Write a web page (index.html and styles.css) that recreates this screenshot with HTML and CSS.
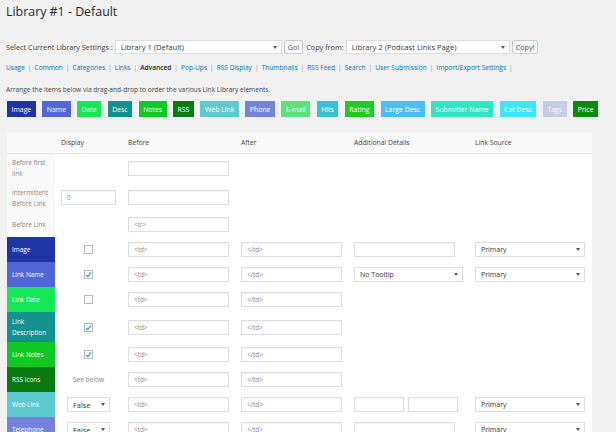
FILE: index.html
```html
<!DOCTYPE html>
<html>
<head>
<meta charset="utf-8">
<title>Library #1 - Default</title>
<link rel="stylesheet" href="styles.css">
</head>
<body>
<div class="wrap">
  <h1 class="title">Library #1 - Default</h1>

  <div class="libsel">
    <span class="lbl">Select Current Library Settings :</span>
    <div class="sel sel-lib"><span>Library 1 (Default)</span><span class="arr"></span></div>
    <button class="btn btn-go">Go!</button>
    <span class="lbl lbl-copy">Copy from:</span>
    <div class="sel sel-copy"><span>Library 2 (Podcast Links Page)</span><span class="arr"></span></div>
    <button class="btn btn-copy">Copy!</button>
  </div>

  <div class="tabs">
    <a>Usage</a><span class="sep">|</span><a>Common</a><span class="sep">|</span><a>Categories</a><span class="sep">|</span><a>Links</a><span class="sep">|</span><b>Advanced</b><span class="sep">|</span><a>Pop-Ups</a><span class="sep">|</span><a>RSS Display</a><span class="sep">|</span><a>Thumbnails</a><span class="sep">|</span><a>RSS Feed</a><span class="sep">|</span><a>Search</a><span class="sep">|</span><a>User Submission</a><span class="sep">|</span><a>Import/Export Settings</a><span class="sep">|</span>
  </div>

  <p class="desc">Arrange the items below via drag-and-drop to order the various Link Library elements.</p>

  <div class="tags">
    <span class="tag c-image">Image</span>
    <span class="tag c-name">Name</span>
    <span class="tag c-date">Date</span>
    <span class="tag c-desc">Desc</span>
    <span class="tag c-notes">Notes</span>
    <span class="tag c-rss">RSS</span>
    <span class="tag c-web">Web Link</span>
    <span class="tag c-phone">Phone</span>
    <span class="tag c-email">E-mail</span>
    <span class="tag c-hits">Hits</span>
    <span class="tag c-rating">Rating</span>
    <span class="tag c-large">Large Desc</span>
    <span class="tag c-submitter">Submitter Name</span>
    <span class="tag c-cat">Cat Desc</span>
    <span class="tag c-tags">Tags</span>
    <span class="tag c-price">Price</span>
  </div>

  <table class="grid">
    <colgroup>
      <col class="w-label"><col class="w-display"><col class="w-before"><col class="w-after"><col class="w-extra"><col class="w-source">
    </colgroup>
    <thead>
      <tr><th></th><th>Display</th><th>Before</th><th>After</th><th>Additional Details</th><th>Link Source</th></tr>
    </thead>
    <tbody>
      <tr class="h30">
        <td class="lab">Before first link</td><td></td>
        <td><div class="inp"></div></td><td></td><td></td><td></td>
      </tr>
      <tr class="h29">
        <td class="lab">Intermittent Before Link</td>
        <td class="ctr"><div class="inp inp-sm">0</div></td>
        <td><div class="inp"></div></td><td></td><td></td><td></td>
      </tr>
      <tr class="h25">
        <td class="lab">Before Link</td><td></td>
        <td><div class="inp">&lt;tr&gt;</div></td><td></td><td></td><td></td>
      </tr>
      <tr class="h25">
        <td class="lab c-image">Image</td>
        <td class="ctr"><span class="cb"></span></td>
        <td><div class="inp">&lt;td&gt;</div></td>
        <td><div class="inp">&lt;/td&gt;</div></td>
        <td><div class="inp"></div></td>
        <td><div class="sel sel-src"><span>Primary</span><span class="arr"></span></div></td>
      </tr>
      <tr class="h25">
        <td class="lab c-name">Link Name</td>
        <td class="ctr"><span class="cb on"></span></td>
        <td><div class="inp">&lt;td&gt;</div></td>
        <td><div class="inp">&lt;/td&gt;</div></td>
        <td><div class="sel sel-tip"><span>No Tooltip</span><span class="arr"></span></div></td>
        <td><div class="sel sel-src"><span>Primary</span><span class="arr"></span></div></td>
      </tr>
      <tr class="h25">
        <td class="lab c-date">Link Date</td>
        <td class="ctr"><span class="cb"></span></td>
        <td><div class="inp">&lt;td&gt;</div></td>
        <td><div class="inp">&lt;/td&gt;</div></td>
        <td></td><td></td>
      </tr>
      <tr class="h30">
        <td class="lab c-desc">Link Description</td>
        <td class="ctr"><span class="cb on"></span></td>
        <td><div class="inp">&lt;td&gt;</div></td>
        <td><div class="inp">&lt;/td&gt;</div></td>
        <td></td><td></td>
      </tr>
      <tr class="h25">
        <td class="lab c-notes">Link Notes</td>
        <td class="ctr"><span class="cb on"></span></td>
        <td><div class="inp">&lt;td&gt;</div></td>
        <td><div class="inp">&lt;/td&gt;</div></td>
        <td></td><td></td>
      </tr>
      <tr class="h25">
        <td class="lab c-rss">RSS Icons</td>
        <td class="ctr note">See below</td>
        <td><div class="inp">&lt;td&gt;</div></td>
        <td><div class="inp">&lt;/td&gt;</div></td>
        <td></td><td></td>
      </tr>
      <tr class="h25">
        <td class="lab c-web">Web Link</td>
        <td class="ctr"><div class="sel sel-bool"><span>False</span><span class="arr"></span></div></td>
        <td><div class="inp">&lt;td&gt;</div></td>
        <td><div class="inp">&lt;/td&gt;</div></td>
        <td><div class="pair"><div class="inp inp-half"></div><div class="inp inp-half"></div></div></td>
        <td><div class="sel sel-src"><span>Primary</span><span class="arr"></span></div></td>
      </tr>
      <tr class="h25">
        <td class="lab c-phone">Telephone</td>
        <td class="ctr"><div class="sel sel-bool"><span>False</span><span class="arr"></span></div></td>
        <td><div class="inp">&lt;td&gt;</div></td>
        <td><div class="inp">&lt;/td&gt;</div></td>
        <td><div class="inp"></div></td>
        <td><div class="sel sel-src"><span>Primary</span><span class="arr"></span></div></td>
      </tr>
    </tbody>
  </table>
</div>
</body>
</html>
```

FILE: styles.css
```css
* { box-sizing: border-box; }
html, body { margin: 0; padding: 0; }
body {
  background: #f1f1f1;
  font-family: "Open Sans", "Noto Sans", sans-serif;
  font-size: 6.6px;
  color: #444;
  width: 616px;
  height: 432px;
  overflow: hidden;
}
.wrap { padding: 0 0 0 6px; }

.title {
  margin: 0;
  padding-top: 2px;
  font-size: 12.4px;
  font-weight: 400;
  color: #23282d;
  line-height: 20px;
}

.libsel {
  display: flex;
  align-items: center;
  margin-top: 18px;
  height: 14px;
}
.lbl { color: #444; margin-right: 2px; font-size: 7.3px; }
.lbl-copy { margin-left: 3px; }
.sel {
  display: flex;
  align-items: center;
  justify-content: space-between;
  height: 14px;
  background: #fff;
  border: 1px solid #ddd;
  padding: 0 4px 0 5px;
  color: #32373c;
  font-size: 7.6px;
}
.arr {
  width: 0; height: 0;
  border-left: 2px solid transparent;
  border-right: 2px solid transparent;
  border-top: 3px solid #555;
}
.sel-lib { width: 167px; }
.sel-copy { width: 164px; }
.btn {
  height: 14px;
  padding: 0 3px;
  margin-left: 2px;
  border: 1px solid #ccc;
  border-radius: 2px;
  background: #f7f7f7;
  color: #555;
  font-family: inherit;
  font-size: 7.2px;
  line-height: 12px;
}

.tabs {
  margin-top: 8px;
  height: 12px;
  line-height: 12px;
  white-space: nowrap;
}
.tabs a { color: #0073aa; }
.tabs b { color: #23282d; font-weight: 600; }
.tabs .sep { color: #999; margin: 0 3px; }

.desc { margin: 11px 0 0; line-height: 10px; color: #444; }

.tags {
  display: flex;
  gap: 6.5px;
  margin-top: 6px;
  height: 16px;
  padding-left: 1px;
}
.tag {
  display: flex;
  align-items: center;
  padding: 0 4.5px;
  color: #fff;
  height: 16px;
  font-size: 6.9px;
}

.c-image { background: #1f35a6; }
.c-name { background: #5266d6; }
.c-date { background: #14e856; }
.c-desc { background: #12918f; }
.c-notes { background: #0ec924; }
.c-rss { background: #0a7a10; }
.c-web { background: #5ccbcf; }
.c-phone { background: #7482d9; }
.c-email { background: #5ce07a; }
.c-hits { background: #3bc0d2; }
.c-rating { background: #22c91f; }
.c-large { background: #4bbcf6; }
.c-submitter { background: #30e5c4; }
.c-cat { background: #3ee6f4; }
.c-tags { background: #c4cce8; }
.c-price { background: #0b8a10; }

.grid {
  margin: 16px 0 0 1px;
  width: 585px;
  table-layout: fixed;
  border-collapse: collapse;
  background: #fff;
}
.w-label { width: 48px; }
.w-display { width: 67px; }
.w-before { width: 113px; }
.w-after { width: 113px; }
.w-extra { width: 121px; }
.w-source { width: 123px; }

.grid th {
  height: 20px;
  padding: 0 6px;
  text-align: left;
  font-weight: 400;
  color: #444;
  background: #f9f9f9;
  border-bottom: 1px solid #e5e5e5;
  font-size: 6.8px;
}
.grid td {
  padding: 0 6px;
  vertical-align: middle;
}
.h30 { height: 30px; }
.h29 { height: 29px; }
.h25 { height: 25px; }

.grid td.lab {
  padding: 0 4px 0 5px;
  background: #f9f9f9;
  color: #888;
  line-height: 11px;
  font-size: 6.4px;
}
.grid td.lab[class*="c-"] { color: #fff; }
.grid td.c-image { background: #1f35a6; }
.grid td.c-name { background: #5266d6; }
.grid td.c-date { background: #14e856; }
.grid td.c-desc { background: #12918f; }
.grid td.c-notes { background: #0ec924; }
.grid td.c-rss { background: #0a7a10; }
.grid td.c-web { background: #5ccbcf; }
.grid td.c-phone { background: #7482d9; }

.grid td.ctr { text-align: center; }
.grid td.ctr > * { margin: 0 auto; }
.note { color: #888; }

.inp {
  width: 101px;
  height: 15px;
  border: 1px solid #ddd;
  box-shadow: inset 0 1px 1px rgba(0,0,0,0.04);
  background: #fff;
  padding: 0 5px;
  line-height: 13px;
  color: #888;
  font-size: 6.4px;
  text-align: left;
}
.inp-sm { width: 55px; margin-left: 0 !important; }
.pair { display: flex; gap: 4px; }
.inp-half { width: 50px; }

.sel-src { width: 110px; height: 15px; font-size: 7px; }
.sel-tip { width: 109px; height: 15px; font-size: 7px; }
.sel-bool { width: 43px; height: 15px; font-size: 7.4px; }

.cb {
  display: block;
  width: 9px;
  height: 9px;
  border: 1px solid #b4b9be;
  background: #fff;
  position: relative;
}
.cb.on::after {
  content: "";
  position: absolute;
  left: 2px;
  top: 0px;
  width: 2px;
  height: 5px;
  border-right: 1.5px solid #1e8cbe;
  border-bottom: 1.5px solid #1e8cbe;
  transform: rotate(40deg);
}
```
